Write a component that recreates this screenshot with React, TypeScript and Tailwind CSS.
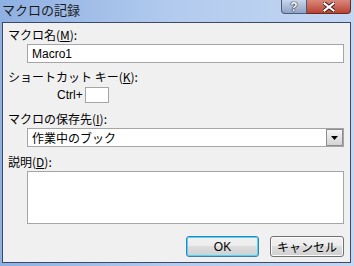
import React from "react";

const font = { fontFamily: '"MS UI Gothic", "Noto Sans CJK JP", "Liberation Sans", sans-serif' };

function U({ c }: { c: string }) {
  return <span className="underline underline-offset-[1px]">{c}</span>;
}

export default function App() {
  return (
    <div
      className="w-[354px] h-[266px] flex flex-col bg-gradient-to-r from-[#8fb0e3] via-[#b3cbee] to-[#c3d6f2] text-[12px] leading-[14px] text-black overflow-hidden"
      style={font}
    >
      {/* Title bar */}
      <div className="h-[22px] flex items-start justify-between pl-[2px] pr-[3px]">
        <div className="pt-[3px] text-[13px] leading-[14px] text-[#1a1a1a]">マクロの記録</div>
        <div className="flex">
          <div className="w-[26px] h-[14px] rounded-bl-[4px] border border-t-0 border-[#4b5a78] bg-gradient-to-b from-[#c8d6ec] to-[#8fa3c6] flex items-center justify-center text-white font-bold text-[12px] leading-[12px]" style={{ fontFamily: '"Liberation Sans", sans-serif', textShadow: "0 0 1px #222, 0 0 1px #222, 0 0 1px #222" }}>?</div>
          <div className="w-[44px] h-[14px] rounded-br-[4px] border border-t-0 border-l-0 border-[#6a2a24] bg-gradient-to-b from-[#d9877b] to-[#b84131] flex items-center justify-center">
            <svg width="12" height="10" viewBox="0 0 12 10">
              <path d="M1.5 1.5L10.5 8.5M10.5 1.5L1.5 8.5" stroke="#3a1a18" strokeWidth="4" strokeLinecap="square" />
              <path d="M1.5 1.5L10.5 8.5M10.5 1.5L1.5 8.5" stroke="#fff" strokeWidth="2.2" strokeLinecap="square" />
            </svg>
          </div>
        </div>
      </div>
      {/* Client area */}
      <div className="flex-1 ml-[2px] mr-[3px] mb-[3px] border border-[#3c4a66] bg-[#f0f0f0] flex flex-col pl-[5px] pr-[6px] pt-[5px]">
        <div className="h-[14px]">マクロ名(<U c="M" />):</div>
        <div className="mt-[2px] ml-[19px] h-[19px] border border-[#a5a5a5] bg-white flex items-center pl-[4px]" style={{ fontFamily: '"Liberation Sans", sans-serif' }}>Macro1</div>
        <div className="mt-[7px] h-[14px]">ショートカット キー(<U c="K" />):</div>
        <div className="mt-[3px] flex items-center">
          <span className="ml-[49px] w-[28px]" style={{ fontFamily: '"Liberation Sans", sans-serif' }}>Ctrl+</span>
          <div className="w-[24px] h-[16px] border border-[#a5a5a5] bg-white" />
        </div>
        <div className="mt-[9px] h-[14px]">マクロの保存先(<U c="I" />):</div>
        <div className="mt-[2px] ml-[19px] h-[19px] border border-[#a5a5a5] bg-white flex items-center justify-between pl-[4px]">
          <span>作業中のブック</span>
          <div className="w-[17px] h-[17px] border border-[#8c8c8c] bg-gradient-to-b from-[#f6f6f6] to-[#d4d4d4] flex items-center justify-center">
            <svg width="7" height="4" viewBox="0 0 7 4"><path d="M0 0h7L3.5 4z" fill="#000" /></svg>
          </div>
        </div>
        <div className="mt-[8px] h-[14px]">説明(<U c="D" />):</div>
        <div className="mt-[2px] ml-[19px] h-[53px] border border-[#a5a5a5] bg-white" />
        <div className="mt-[12px] flex justify-end gap-[11px]">
          <div className="w-[73px] h-[21px] rounded-[3px] border border-[#3c7fb1] shadow-[inset_0_0_0_1px_#48d8fb] bg-[linear-gradient(#f2f2f2_0%,#ebebeb_50%,#dddddd_50%,#cfcfcf_100%)] flex items-center justify-center" style={{ fontFamily: '"Liberation Sans", sans-serif' }}>OK</div>
          <div className="w-[74px] h-[21px] rounded-[3px] border border-[#707070] shadow-[inset_0_0_0_1px_#fcfcfc] bg-[linear-gradient(#f2f2f2_0%,#ebebeb_50%,#dddddd_50%,#cfcfcf_100%)] flex items-center justify-center">キャンセル</div>
        </div>
      </div>
    </div>
  );
}
